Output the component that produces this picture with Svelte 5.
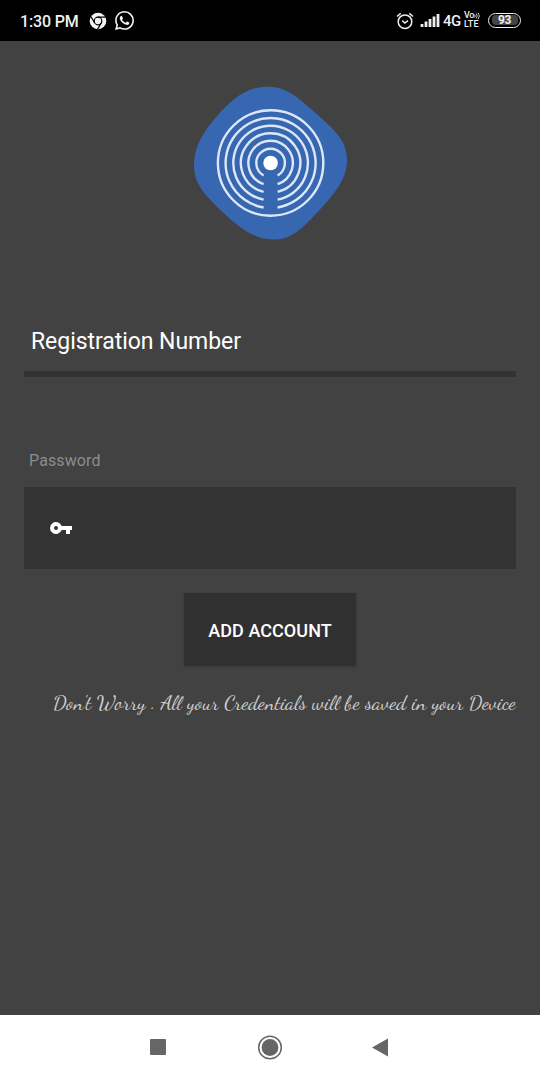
<script>
  let registration = $state('');
  const rings = [45, 37.3, 29.7, 22.2, 14.3];
  const bars = [3, 5.5, 8, 10.5, 13];
</script>

<main class="screen">
  <header class="status">
    <span class="time">1:30 PM</span>
    <svg class="chrome" width="18" height="18" viewBox="0 0 18 18">
      <circle cx="9" cy="9" r="8.3" fill="#f4f4f4" />
      <g fill="none" stroke="#000" stroke-width="1.2">
        <circle cx="9" cy="9" r="3.8" />
        <path d="M9 5.2H16.5M5.7 10.9 2 4.8M12.3 10.9 8.6 17.3" />
      </g>
    </svg>
    <svg class="whatsapp" width="19" height="19" viewBox="0 0 24 24" fill="#f4f4f4">
      <path d="M17.47 14.38c-.3-.15-1.76-.87-2.03-.97-.27-.1-.47-.15-.67.15-.2.3-.77.97-.94 1.16-.17.2-.35.23-.64.08-.3-.15-1.26-.47-2.39-1.48-.88-.79-1.48-1.76-1.65-2.06-.17-.3-.02-.46.13-.6.13-.14.3-.35.45-.53.15-.17.2-.3.3-.5.1-.2.05-.37-.03-.52-.07-.15-.67-1.61-.91-2.2-.24-.58-.49-.5-.67-.51h-.57c-.2 0-.52.07-.8.37-.27.3-1.04 1.02-1.04 2.48s1.07 2.88 1.21 3.07c.15.2 2.1 3.2 5.08 4.49 2.5 1 3 .8 3.53.75.53-.05 1.76-.72 2-1.41.25-.7.25-1.29.18-1.42-.08-.12-.27-.2-.57-.35M12.05 21.78a9.87 9.87 0 0 1-5.03-1.37l-.36-.22-3.74.98 1-3.64-.24-.37a9.86 9.86 0 0 1-1.51-5.26c0-5.45 4.44-9.88 9.89-9.88a9.88 9.88 0 0 1 9.87 9.89c0 5.45-4.43 9.87-9.88 9.87M20.46 3.49A11.82 11.82 0 0 0 12.05 0C5.5 0 .16 5.34.16 11.89c0 2.1.55 4.14 1.59 5.94L.06 24l6.3-1.65a11.88 11.88 0 0 0 5.68 1.45c6.56 0 11.9-5.34 11.9-11.9a11.82 11.82 0 0 0-3.48-8.41Z" />
    </svg>
    <span class="grow"></span>
    <svg class="alarm" width="18" height="18" viewBox="0 0 18 18" fill="none" stroke="#eee" stroke-width="1.5">
      <circle cx="9" cy="9.7" r="6.8" />
      <path d="M1 4.5 4.7 1.4M13.3 1.4 17 4.5M6.2 8.5 8.8 11 12 8.6" />
    </svg>
    <svg class="signal" width="20" height="15" viewBox="0 0 20 15" fill="#eee">
      {#each bars as height, i}
        <rect x={0.6 + i * 4} y={14 - height} width="2.8" {height} />
      {/each}
    </svg>
    <span class="network">4G</span>
    <span class="volte">
      <span class="vo"><span>Vo</span><svg width="6" height="8" viewBox="0 0 6 8" fill="none" stroke="#ddd" stroke-width=".9"><path d="M.5 2.5Q2 4 .5 5.5M2.2 1.5Q4.2 4 2.2 6.5M4 .7Q6.8 4 4 7.3" /></svg></span>
      <span class="lte">LTE</span>
    </span>
    <span class="battery"><span>93</span></span>
  </header>

  <section class="content">
    <svg class="logo" width="170" height="170" viewBox="0 0 170 170">
      <path fill="#3867b2" d="M83 8.7C101 8.7 112 18.5 130 34.5C149 51.5 162 62 162 82C162 98 154 111 135 131.5C119 149 107 161.5 90 161.5C71 161.5 56 152 37 133.5C18 115 9 105 9 87C9 69 18 53 36 33.5C53 15.5 65 8.7 83 8.7Z" />
      <g fill="none" stroke="#dce8fa" stroke-width="2.4">
        <circle cx="85.6" cy="85" r="52.7" />
        {#each rings as r}
          {@const dy = Math.sqrt(r * r - 49)}
          <path d="M78.6 {85 + dy}A{r} {r} 0 1 1 92.6 {85 + dy}" />
        {/each}
      </g>
      <circle cx="85.6" cy="85" r="7.3" fill="#fff" />
    </svg>

    <input class="registration" type="text" placeholder="Registration Number" aria-label="Registration Number" bind:value={registration} />

    <label class="label" for="password">Password</label>
    <div class="password">
      <svg width="24" height="24" viewBox="0 0 24 24" fill="#fff">
        <path d="M12.65 10A6 6 0 1 0 12.65 14H17v4h4v-4h2v-4H12.65ZM7 14a2 2 0 1 1 0-4 2 2 0 0 1 0 4Z" />
      </svg>
      <input id="password" type="password" />
    </div>

    <button>ADD ACCOUNT</button>
    <p>Don't Worry . All your Credentials will be saved in your Device</p>
  </section>

  <nav>
    <svg width="540" height="65" viewBox="0 0 540 65">
      <rect x="150" y="24" width="16" height="16" rx="1" fill="#666" />
      <circle cx="270" cy="32.5" r="11.3" fill="none" stroke="#666" stroke-width="1.5" />
      <circle cx="270" cy="32.5" r="8.4" fill="#666" />
      <path d="M372 32.5 388 23.5V41.5Z" fill="#666" />
    </svg>
  </nav>
</main>

<style>
  :global(body) { margin: 0; background: #424242; }
  .screen {
    width: 540px;
    height: 1080px;
    display: flex;
    flex-direction: column;
    overflow: hidden;
    background: #424242;
    color: #fff;
    font-family: Roboto, sans-serif;
  }
  svg { display: block; flex: none; }
  .status {
    box-sizing: border-box;
    height: 41px;
    flex: none;
    display: flex;
    align-items: center;
    padding: 0 19px 0 20px;
    background: #000;
    color: #f0f0f0;
  }
  .time { width: 69px; padding-top: 1px; font-size: 16px; font-weight: 500; letter-spacing: -.15px; white-space: nowrap; }
  .chrome { margin-left: -.5px; }
  .whatsapp { margin-left: 8.5px; }
  .grow { flex: 1; }
  .signal { margin-left: 6px; }
  .network { margin-left: 3px; width: 21px; font-size: 15px; font-weight: 500; letter-spacing: -.5px; }
  .volte { display: flex; flex-direction: column; width: 18px; font-size: 9px; line-height: 8.5px; font-weight: 500; }
  .vo { display: flex; height: 8px; line-height: 7px; letter-spacing: -.3px; }
  .lte { letter-spacing: .1px; }
  .battery {
    box-sizing: border-box;
    width: 33px;
    height: 15px;
    margin-left: 6px;
    padding: 1px 2.5px;
    border: 1.5px solid #eee;
    border-radius: 8px;
    font-size: 12px;
    line-height: 11px;
    font-weight: 700;
    text-align: center;
  }
  .battery span { display: block; height: 10px; background: #444; border-radius: 4px; letter-spacing: -.3px; }
  .content { flex: 1; display: flex; flex-direction: column; padding: 37px 24px 0; }
  .logo { margin-left: 161px; }
  input { font-family: inherit; color: #fff; background: transparent; border: 0; outline: 0; border-radius: 0; }
  .registration {
    box-sizing: border-box;
    width: 492px;
    height: 68px;
    margin-top: 61px;
    padding: 3px 7px 0;
    border-bottom: 6px solid #333;
    font-size: 23px;
    letter-spacing: -.05px;
  }
  .registration::placeholder { color: #fff; opacity: 1; }
  .label { margin: 74px 0 0 5px; height: 20px; font-size: 16px; line-height: 20px; letter-spacing: .12px; color: #8c8c8c; }
  .password { height: 82px; margin-top: 16px; padding-left: 25px; display: flex; align-items: center; gap: 12px; background: #333; }
  .password input { flex: 1; height: 60px; font-size: 20px; }
  button {
    align-self: center;
    width: 172px;
    height: 73px;
    margin-top: 24px;
    padding: 2px 0 0;
    border: 0;
    background: #303030;
    color: #fff;
    font: 500 18px Roboto, sans-serif;
    letter-spacing: .05px;
    box-shadow: 0 1px 3px rgb(0 0 0 / 15%);
  }
  p {
    margin: 25px 0 0 29px;
    font: 400 20.65px/24px "Dancing Script", "Liberation Serif", cursive;
    color: #d0d0d0;
    white-space: nowrap;
  }
  nav { height: 65px; flex: none; background: #fff; }
</style>
